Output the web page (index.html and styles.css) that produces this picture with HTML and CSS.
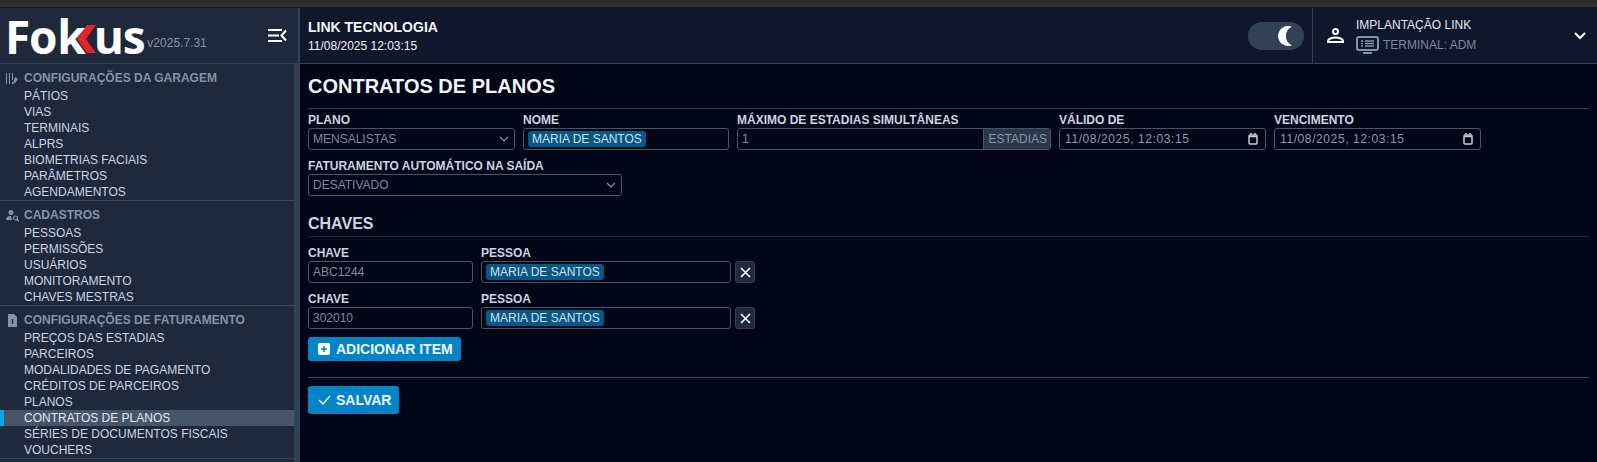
FILE: index.html
```html
<!DOCTYPE html>
<html lang="pt-BR">
<head>
<meta charset="utf-8">
<title>Contratos de planos</title>
<link rel="stylesheet" href="styles.css">
</head>
<body>
<div class="topstrip"></div>
<div class="app">
  <header class="header">
    <div class="brand">
      <div class="logo"><span>Fo</span><span class="logo-kk">k</span><svg class="logo-k" width="20" height="30" viewBox="0 0 20 30"><path d="M20 1 10 15l10 14h-9L1 15 11 1z" fill="#e1232b"/></svg><span>us</span></div>
      <span class="version">v2025.7.31</span>
      <svg class="collapse" width="19" height="13" viewBox="0 0 19 13" fill="none" stroke="#fff" stroke-width="2"><path d="M0 1h14M0 6.500h11M0 12h14M18 1.500l-4.500 5 4.500 5"/></svg>
    </div>
    <div class="company">
      <div class="company-name">LINK TECNOLOGIA</div>
      <div class="company-date">11/08/2025 12:03:15</div>
    </div>
    <div class="toggle"><svg width="15" height="20" viewBox="0 0 15 20"><path d="M14 .8A10 10 0 1 0 14 19.200 10 10 0 0 1 14 .8z" fill="#fff"/></svg></div>
    <div class="user">
      <svg class="user-icon" width="17" height="15" viewBox="0 0 17 15" fill="none" stroke="#fff" stroke-width="2"><circle cx="8.500" cy="3.500" r="2.500"/><path d="M1 14v-1c0-2 4-3.500 7.500-3.500S16 11 16 13v1z"/></svg>
      <div class="user-text">
        <div class="user-name">IMPLANTAÇÃO LINK</div>
        <div class="terminal">
          <svg width="23" height="18" viewBox="0 0 23 18" fill="none" stroke="#7f93ad" stroke-width="2"><rect x="1" y="1" width="21" height="13" rx="2"/><path d="M5 5h2M9 5h9M5 7.500h2M9 7.500h9M5 10h2M9 10h9" stroke-width="1.500"/><path d="M7 17h9"/></svg>
          <span>TERMINAL: ADM</span>
        </div>
      </div>
      <svg class="chev" width="12" height="8" viewBox="0 0 12 8" fill="none" stroke="#fff" stroke-width="2"><path d="m1 1 5 5 5-5"/></svg>
    </div>
  </header>
  <div class="body">
    <aside class="sidebar">
      <nav class="nav">
        <section class="group">
          <h3 class="group-title"><svg width="13" height="13" viewBox="0 0 13 13" fill="#8494a8"><path d="M0 1h1v11H0zM3 1h1v11H3zM6 1h1v7H6zM6 10h1v2H6zM9 5l3 2-3 4-2 1 .3-2z"/></svg>CONFIGURAÇÕES DA GARAGEM</h3>
          <a>PÁTIOS</a><a>VIAS</a><a>TERMINAIS</a><a>ALPRS</a><a>BIOMETRIAS FACIAIS</a><a>PARÂMETROS</a><a>AGENDAMENTOS</a>
        </section>
        <section class="group">
          <h3 class="group-title"><svg width="13" height="13" viewBox="0 0 13 13" fill="#8494a8"><circle cx="5" cy="3.500" r="2.500"/><path d="M0 11c0-3 2-4 5-4l1 4z"/><circle cx="9.500" cy="9" r="2" fill="none" stroke="#8494a8" stroke-width="1.200"/><path d="m11 10.500 2 2" stroke="#8494a8" stroke-width="1.200"/></svg>CADASTROS</h3>
          <a>PESSOAS</a><a>PERMISSÕES</a><a>USUÁRIOS</a><a>MONITORAMENTO</a><a>CHAVES MESTRAS</a>
        </section>
        <section class="group">
          <h3 class="group-title"><svg width="13" height="13" viewBox="0 0 13 13" fill="#8494a8"><path d="M2 0h6l3 3v10H2z"/><path d="M6.500 5v5" stroke="#1e293b" stroke-width="1.500"/></svg>CONFIGURAÇÕES DE FATURAMENTO</h3>
          <a>PREÇOS DAS ESTADIAS</a><a>PARCEIROS</a><a>MODALIDADES DE PAGAMENTO</a><a>CRÉDITOS DE PARCEIROS</a><a>PLANOS</a><a class="active">CONTRATOS DE PLANOS</a><a>SÉRIES DE DOCUMENTOS FISCAIS</a><a>VOUCHERS</a>
        </section>
      </nav>
      <div class="scrollbar"></div>
    </aside>
    <main class="main">
      <h1 class="title">CONTRATOS DE PLANOS</h1>
      <div class="row row1">
        <label class="field w-plano"><span class="lab">PLANO</span>
          <span class="ctl"><span>MENSALISTAS</span><svg class="dd" width="10" height="6" viewBox="0 0 10 6" fill="none" stroke="#8a94a3" stroke-width="1.200"><path d="m1 1 4 4 4-4"/></svg></span></label>
        <label class="field w-nome"><span class="lab">NOME</span>
          <span class="ctl tagged"><span class="tag">MARIA DE SANTOS</span></span></label>
        <label class="field w-max"><span class="lab">MÁXIMO DE ESTADIAS SIMULTÂNEAS</span>
          <span class="ctl group-ctl"><span class="grow">1</span><span class="addon">ESTADIAS</span></span></label>
        <label class="field w-date"><span class="lab">VÁLIDO DE</span>
          <span class="ctl date-ctl"><span class="dt">11/08/2025, 12:03:15</span><svg width="10" height="12" viewBox="0 0 10 12" fill="none" stroke="#c5ccd6" stroke-width="1.500"><rect x="1" y="2" width="8" height="9" rx="1"/><path d="M1 3.500h8M3 0v2M7 0v2"/></svg></span></label>
        <label class="field w-date"><span class="lab">VENCIMENTO</span>
          <span class="ctl date-ctl"><span class="dt">11/08/2025, 12:03:15</span><svg width="10" height="12" viewBox="0 0 10 12" fill="none" stroke="#c5ccd6" stroke-width="1.500"><rect x="1" y="2" width="8" height="9" rx="1"/><path d="M1 3.500h8M3 0v2M7 0v2"/></svg></span></label>
      </div>
      <div class="row row2">
        <label class="field w-fat"><span class="lab">FATURAMENTO AUTOMÁTICO NA SAÍDA</span>
          <span class="ctl"><span>DESATIVADO</span><svg class="dd" width="10" height="6" viewBox="0 0 10 6" fill="none" stroke="#8a94a3" stroke-width="1.200"><path d="m1 1 4 4 4-4"/></svg></span></label>
      </div>
      <h2 class="subtitle">CHAVES</h2>
      <div class="row key-row">
        <label class="field w-key"><span class="lab">CHAVE</span><span class="ctl"><span>ABC1244</span></span></label>
        <label class="field w-person"><span class="lab">PESSOA</span><span class="ctl tagged"><span class="tag">MARIA DE SANTOS</span></span></label>
        <button class="remove" type="button"><svg width="11" height="11" viewBox="0 0 11 11" stroke="#fff" stroke-width="1.600"><path d="m1 1 9 9M10 1l-9 9"/></svg></button>
      </div>
      <div class="row key-row">
        <label class="field w-key"><span class="lab">CHAVE</span><span class="ctl"><span>302010</span></span></label>
        <label class="field w-person"><span class="lab">PESSOA</span><span class="ctl tagged"><span class="tag">MARIA DE SANTOS</span></span></label>
        <button class="remove" type="button"><svg width="11" height="11" viewBox="0 0 11 11" stroke="#fff" stroke-width="1.600"><path d="m1 1 9 9M10 1l-9 9"/></svg></button>
      </div>
      <button class="btn add" type="button"><svg width="12" height="12" viewBox="0 0 12 12"><rect width="12" height="12" rx="2" fill="#fff"/><path d="M6 3v6M3 6h6" stroke="#0284c7" stroke-width="1.600"/></svg>ADICIONAR ITEM</button>
      <hr class="sep">
      <button class="btn save" type="button"><svg width="13" height="10" viewBox="0 0 13 10" fill="none" stroke="#fff" stroke-width="1.300"><path d="m1 5 4 4 7-8"/></svg>SALVAR</button>
    </main>
  </div>
</div>
</body>
</html>
```

FILE: styles.css
```css
* { box-sizing: border-box; }
html, body { margin: 0; height: 100%; overflow: hidden; }
body { background: #020617; color: #cbd5e1; font-family: "Liberation Sans", Arial, sans-serif; font-size: 12px; }
.topstrip { height: 7px; background: #2b2b2b; }
.app { display: flex; flex-direction: column; height: 455px; }
.header { height: 57px; flex: none; display: flex; align-items: center; background: #0f172a; border-top: 1px solid #1a1a1a; border-bottom: 1px solid #334155; }
.brand { width: 300px; height: 100%; flex: none; display: flex; align-items: center; background: #1e293b; padding: 0 11px 0 5px; border-right: 2px solid #334155; }
.logo { display: flex; align-items: center; color: #fff; font-family: "Open Sans", "Liberation Sans", sans-serif; font-weight: 700; font-size: 46px; line-height: 36px; letter-spacing: -1.2px; white-space: nowrap; }
.logo-kk { margin-left: 1px; }
.logo-k { flex: none; margin: 6px -2px 0 -9px; }
.version { color: #8494a8; font-size: 12px; margin: 14px auto 0 3px; }
.collapse { flex: none; }
.company { flex: 1; padding: 2px 0 0 8px; color: #f1f5f9; }
.company-name { font-size: 14px; line-height: 18px; font-weight: 700; }
.company-date { font-size: 12px; line-height: 18px; margin-top: 1px; }
.toggle { width: 56px; height: 28px; border-radius: 14px; background: #334155; display: flex; align-items: center; justify-content: flex-end; padding-right: 11px; margin-right: 8px; }
.user { width: 285px; height: 100%; flex: none; border-left: 1px solid #334155; display: flex; align-items: center; padding: 0 11px 0 14px; }
.user-icon { flex: none; margin-right: 12px; }
.user-text { flex: 1; padding-top: 1px; }
.user-name { font-size: 12px; line-height: 14px; color: #e2e8f0; }
.terminal { display: flex; align-items: center; gap: 4px; color: #7a8ba0; font-size: 12px; margin-top: 4px; }
.body { flex: 1; min-height: 0; display: flex; }
.sidebar { width: 300px; flex: none; display: flex; background: #1e293b; overflow: hidden; }
.nav { flex: 1; min-width: 0; }
.scrollbar { width: 6px; background: #334155; }
.group { border-bottom: 1px solid #3c4a5e; }
.group-title { margin: 0; padding: 4px 0 0 6px; height: 24px; display: flex; align-items: center; gap: 5px; font-size: 12px; line-height: 16px; font-weight: 700; color: #8494a8; }
.group-title svg { flex: none; }
.nav a { display: block; height: 16px; line-height: 16px; padding-left: 24px; font-size: 12px; color: #cbd5e1; }
.nav a.active { background: #475569; color: #e2e8f0; border-left: 4px solid #0ea5e9; padding-left: 20px; }
.main { flex: 1; min-width: 0; padding: 0 8px; }
.title { margin: 0; font-size: 20px; line-height: 44px; height: 45px; font-weight: 700; color: #f1f5f9; border-bottom: 1px solid #334155; }
.row { display: flex; gap: 8px; }
.row1 { margin-top: 3px; }
.row2 { margin-top: 8px; }
.field { display: flex; flex-direction: column; }
.lab { font-size: 12px; line-height: 16px; font-weight: 700; color: #cbd5e1; }
.ctl { height: 22px; display: flex; align-items: center; justify-content: space-between; border: 1px solid #475569; border-radius: 3px; padding: 0 4px; color: #7f8ca0; font-size: 12px; background: #020617; }
.dd { margin-right: 1px; }
.tagged { justify-content: flex-start; }
.tag { background: #075985; color: #d5dfea; border-radius: 3px; padding: 0 4px; line-height: 16px; height: 16px; }
.group-ctl { padding: 0 0 0 4px; overflow: hidden; }
.grow { flex: 1; }
.addon { background: #2b3849; height: 100%; padding: 0 3px 0 5px; line-height: 20px; border-left: 1px solid #475569; color: #8a96a6; }
.date-ctl { padding: 0 7px 0 5px; }
.dt { letter-spacing: .6px; color: #8f9baa; }
.w-plano { width: 207px; }
.w-nome { width: 206px; }
.w-max { width: 314px; }
.w-date { width: 207px; }
.w-fat { width: 314px; }
.subtitle { margin: 16px 0 0; height: 25px; line-height: 24px; font-size: 16px; font-weight: 700; color: #cbd5e1; border-bottom: 1px solid #1e293b; }
.key-row { margin-top: 8px; align-items: flex-end; }
.w-key { width: 165px; }
.w-person { width: 250px; }
.remove { width: 20px; height: 22px; margin-left: -4px; padding: 0; display: flex; align-items: center; justify-content: center; background: #1e293b; border: 1px solid #334155; border-radius: 3px; }
.btn { display: flex; align-items: center; gap: 6px; border: 0; border-radius: 3px; background: #0284c7; color: #f1f5f9; font-family: inherit; font-weight: 700; font-size: 14px; white-space: nowrap; padding: 0 0 0 10px; }
.btn svg { flex: none; }
.add { margin-top: 8px; width: 153px; height: 24px; }
.save { width: 91px; height: 28px; gap: 5px; }
.sep { margin: 16px 0 8px; border: 0; border-top: 1px solid #334155; }
```
